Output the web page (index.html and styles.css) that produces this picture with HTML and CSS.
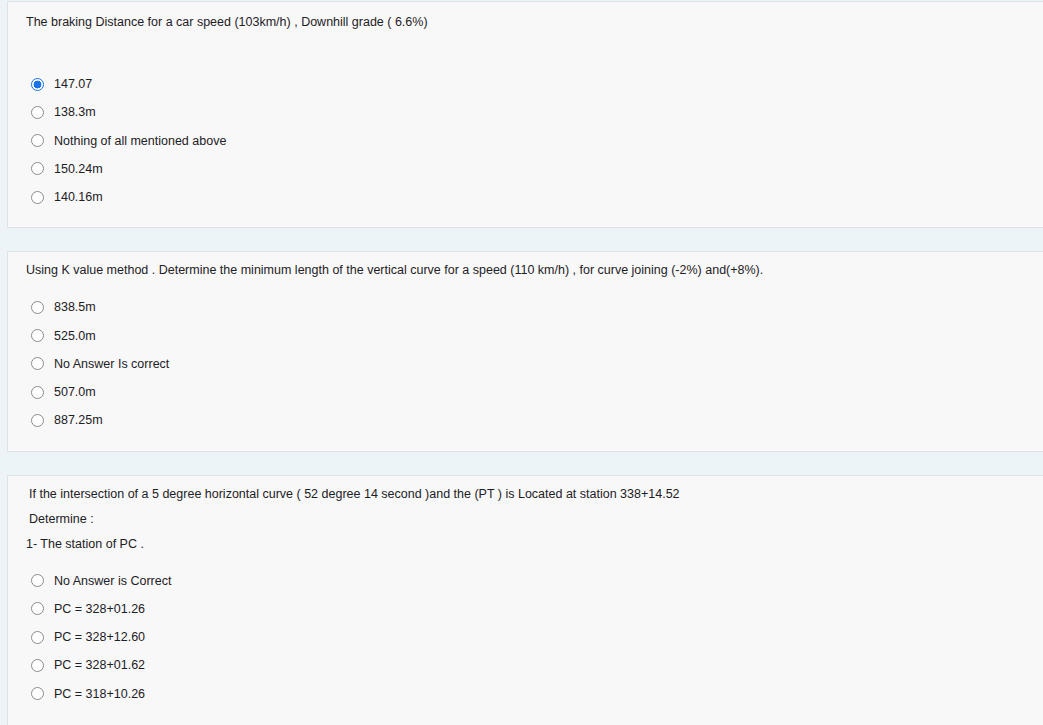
FILE: index.html
```html
<!DOCTYPE html>
<html>
<head>
<meta charset="utf-8">
<link rel="stylesheet" href="styles.css">
</head>
<body>
<div class="page">
  <div class="card first">
    <div class="qtext">
      <p class="line">The braking Distance for a car speed (103km/h) , Downhill grade ( 6.6%)</p>
      <p class="line empty">&nbsp;</p>
    </div>
    <div class="answers">
      <label class="opt"><input type="radio" name="q1" checked><span>147.07</span></label>
      <label class="opt"><input type="radio" name="q1"><span>138.3m</span></label>
      <label class="opt"><input type="radio" name="q1"><span>Nothing of all mentioned above</span></label>
      <label class="opt"><input type="radio" name="q1"><span>150.24m</span></label>
      <label class="opt"><input type="radio" name="q1"><span>140.16m</span></label>
    </div>
  </div>
  <div class="card">
    <div class="qtext">
      <p class="line">Using K value method . Determine the minimum length of the vertical curve for a speed (110 km/h) , for curve joining (-2%) and(+8%).</p>
    </div>
    <div class="answers">
      <label class="opt"><input type="radio" name="q2"><span>838.5m</span></label>
      <label class="opt"><input type="radio" name="q2"><span>525.0m</span></label>
      <label class="opt"><input type="radio" name="q2"><span>No Answer Is correct</span></label>
      <label class="opt"><input type="radio" name="q2"><span>507.0m</span></label>
      <label class="opt"><input type="radio" name="q2"><span>887.25m</span></label>
    </div>
  </div>
  <div class="card last">
    <div class="qtext">
      <p class="line indent">If the intersection of a 5 degree horizontal curve ( 52 degree 14 second )and the (PT ) is Located at station 338+14.52</p>
      <p class="line indent">Determine :</p>
      <p class="line">1- The station of PC .</p>
    </div>
    <div class="answers">
      <label class="opt"><input type="radio" name="q3"><span>No Answer is Correct</span></label>
      <label class="opt"><input type="radio" name="q3"><span>PC = 328+01.26</span></label>
      <label class="opt"><input type="radio" name="q3"><span>PC = 328+12.60</span></label>
      <label class="opt"><input type="radio" name="q3"><span>PC = 328+01.62</span></label>
      <label class="opt"><input type="radio" name="q3"><span>PC = 318+10.26</span></label>
    </div>
  </div>
</div>
</body>
</html>
```
FILE: styles.css
```css
html, body {
  margin: 0;
  padding: 0;
  background: #edf4f7;
  overflow: hidden;
}
body {
  font-family: "Liberation Sans", Arial, sans-serif;
  font-size: 12.5px;
  color: #1d2125;
}
.page {
  display: flex;
  flex-direction: column;
  gap: 23px;
  padding: 1px 0 0 7px;
}
.card {
  background: #f8f8f8;
  border: 1px solid #dee2e6;
  border-right: none;
  padding: 6px 0 16px 18px;
}
.card.first {
  padding-top: 8px;
}
.card.last {
  padding-bottom: 40px;
}
.qtext {
  margin-bottom: 10px;
}
.line {
  margin: 0;
  line-height: 25px;
}
.line.indent {
  padding-left: 3px;
}
.answers {
  display: flex;
  flex-direction: column;
}
.opt {
  display: flex;
  align-items: center;
  height: 28.25px;
  padding-left: 5px;
}
.opt input {
  -webkit-appearance: none;
  appearance: none;
  box-sizing: border-box;
  width: 13px;
  height: 13px;
  margin: 0 10px 0 0;
  border: 1px solid #8a8a8a;
  border-radius: 50%;
  background: #fff;
}
.opt input:checked {
  border-color: #1a73e8;
  background: radial-gradient(circle, #1a73e8 0 3.6px, #fff 4.2px);
}
```
